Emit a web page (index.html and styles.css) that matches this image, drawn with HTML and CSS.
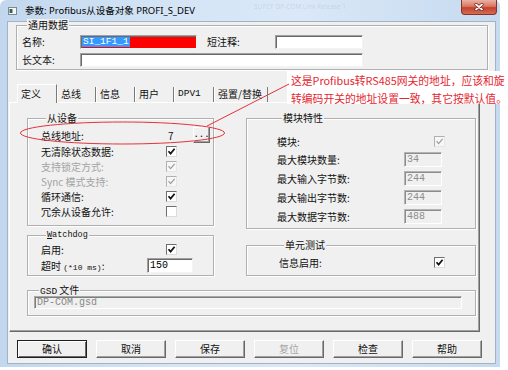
FILE: index.html
```html
<!DOCTYPE html>
<html lang="zh-CN">
<head>
<meta charset="utf-8">
<title>参数: Profibus从设备对象 PROFI_S_DEV</title>
<link rel="stylesheet" href="styles.css">
</head>
<body>
<div class="window">
  <div class="titlebar">
    <svg class="app-icon" width="9" height="8" viewBox="0 0 9 8">
      <rect x="0.5" y="0.5" width="8" height="7" fill="#f6f6f6" stroke="#7d8a94"/>
      <rect x="1.5" y="2" width="3" height="4" fill="#2e6a50"/>
    </svg>
    <span class="title">参数: Profibus从设备对象 PROFI_S_DEV</span>
    <span class="ghost">SUPCF DP-COM Link Release 1</span>
    <div class="close">
      <svg width="10" height="8" viewBox="0 0 10 8">
        <path d="M2 1.5 L8 6.5 M8 1.5 L2 6.5" stroke="#6b1d14" stroke-width="3.2" stroke-linecap="round"/>
        <path d="M2 1.5 L8 6.5 M8 1.5 L2 6.5" stroke="#ffffff" stroke-width="1.8" stroke-linecap="round"/>
      </svg>
    </div>
  </div>

  <div class="client">
    <div class="group general">
      <div class="legend">通用数据</div>
      <div class="general-grid">
        <span class="glabel">名称:</span>
        <div class="field name-field"><span class="sel mono">SI_1F1_1</span></div>
        <span class="glabel short-label">短注释:</span>
        <div class="field"></div>
        <span class="glabel">长文本:</span>
        <div class="field long"></div>
      </div>
    </div>

    <div class="tabs">
      <div class="tab active w40">定义</div>
      <div class="tab w39">总线</div>
      <div class="tab w39">信息</div>
      <div class="tab w39">用户</div>
      <div class="tab w40 mono tab-dpv">DPV1</div>
      <div class="tab w54">强置/替换</div>
    </div>

    <div class="pane">
      <div class="cols">
        <div class="col col-left">
          <div class="group slave">
            <div class="legend">从设备</div>
            <div class="rows">
              <div class="row row-addr">
                <span class="lbl">总线地址:</span>
                <span class="val">7</span>
                <span class="dots">...</span>
              </div>
              <div class="row">
                <span class="lbl">无清除状态数据:</span>
                <span class="cb"><svg viewBox="0 0 9 9"><path d="M1.5 4.2 L3.6 6.6 L7.6 1.8"/></svg></span>
              </div>
              <div class="row dis">
                <span class="lbl">支持锁定方式:</span>
                <span class="cb dis"><svg viewBox="0 0 9 9"><path d="M1.5 4.2 L3.6 6.6 L7.6 1.8"/></svg></span>
              </div>
              <div class="row dis">
                <span class="lbl">Sync 模式支持:</span>
                <span class="cb dis"><svg viewBox="0 0 9 9"><path d="M1.5 4.2 L3.6 6.6 L7.6 1.8"/></svg></span>
              </div>
              <div class="row">
                <span class="lbl">循环通信:</span>
                <span class="cb"><svg viewBox="0 0 9 9"><path d="M1.5 4.2 L3.6 6.6 L7.6 1.8"/></svg></span>
              </div>
              <div class="row">
                <span class="lbl">冗余从设备允许:</span>
                <span class="cb"></span>
              </div>
            </div>
          </div>

          <div class="group watchdog">
            <div class="legend mono wd-legend"><u>W</u>atchdog</div>
            <div class="rows wd-rows">
              <div class="row">
                <span class="lbl">启用:</span>
                <span class="cb"><svg viewBox="0 0 9 9"><path d="M1.5 4.2 L3.6 6.6 L7.6 1.8"/></svg></span>
              </div>
              <div class="row row-timeout">
                <span class="lbl lbl-timeout">超时 <span class="mono small-mono">(*10 ms)</span>:</span>
                <div class="field num"><span class="mono">150</span></div>
              </div>
            </div>
          </div>
        </div>

        <div class="col col-right">
          <div class="group module">
            <div class="legend">模块特性</div>
            <div class="rows mod-rows">
              <div class="row row-mod">
                <span class="lbl lbl-mod">模块:</span>
                <span class="cb dis"><svg viewBox="0 0 9 9"><path d="M1.5 4.2 L3.6 6.6 L7.6 1.8"/></svg></span>
              </div>
              <div class="row row-19">
                <span class="lbl lbl-num">最大模块数量:</span>
                <div class="field num-dis"><span class="mono">34</span></div>
              </div>
              <div class="row row-19">
                <span class="lbl lbl-num">最大输入字节数:</span>
                <div class="field num-dis"><span class="mono">244</span></div>
              </div>
              <div class="row row-19">
                <span class="lbl lbl-num">最大输出字节数:</span>
                <div class="field num-dis"><span class="mono">244</span></div>
              </div>
              <div class="row row-19">
                <span class="lbl lbl-num">最大数据字节数:</span>
                <div class="field num-dis"><span class="mono">488</span></div>
              </div>
            </div>
          </div>

          <div class="group unit">
            <div class="legend">单元测试</div>
            <div class="rows unit-rows">
              <div class="row">
                <span class="lbl lbl-unit">信息启用:</span>
                <span class="cb"><svg viewBox="0 0 9 9"><path d="M1.5 4.2 L3.6 6.6 L7.6 1.8"/></svg></span>
              </div>
            </div>
          </div>
        </div>
      </div>

      <div class="group gsd">
        <div class="legend"><span class="mono gsd-mono">GSD</span> 文件</div>
        <div class="field gsd-field"><span class="mono">DP-COM.gsd</span></div>
      </div>
    </div>

    <div class="buttons">
      <div class="btn default">确认</div>
      <div class="btn">取消</div>
      <div class="btn">保存</div>
      <div class="btn disabled">复位</div>
      <div class="btn">检查</div>
      <div class="btn">帮助</div>
    </div>
  </div>
</div>

<div class="note">
  <div>这是Profibus转RS485网关的地址，应该和旋</div>
  <div>转编码开关的地址设置一致，其它按默认值。</div>
</div>

<svg class="marks" width="508" height="370" viewBox="0 0 508 370">
  <ellipse cx="122.5" cy="133" rx="102" ry="11" fill="none" stroke="#e5323a" stroke-width="1"/>
  <line x1="207" y1="126" x2="289" y2="84" stroke="#e5323a" stroke-width="1"/>
</svg>
</body>
</html>
```

FILE: styles.css
```css
* { box-sizing: border-box; }
html, body { margin: 0; padding: 0; }
body {
  width: 508px;
  height: 370px;
  background: #ffffff;
  font-family: "Noto Sans CJK SC", "Noto Sans", sans-serif;
  font-size: 10px;
  color: #111;
  overflow: hidden;
  position: relative;
}
.mono { font-family: "Liberation Mono", "DejaVu Sans Mono", monospace; }

.window {
  position: relative;
  width: 500px;
  height: 367px;
  background: linear-gradient(to right, #c2d7ee 0%, #d5e5f6 35%, #dae8f7 60%, #c6daef 100%);
  border-radius: 6px 6px 0 0;
  display: flex;
  flex-direction: column;
}

.titlebar {
  height: 22px;
  display: flex;
  align-items: center;
  padding-left: 8px;
}
.app-icon { flex: none; margin-right: 8px; }
.title {
  width: 229px;
  flex: none;
  font-family: "Noto Sans", "Noto Sans CJK SC", sans-serif;
  font-size: 9.5px;
  line-height: 12px;
  color: #000;
  white-space: nowrap;
}
.ghost {
  align-self: flex-start;
  margin-top: 2px;
  font-family: "Noto Sans", sans-serif;
  font-size: 6.5px;
  color: rgba(70, 95, 130, 0.16);
  white-space: nowrap;
}
.close {
  margin-left: auto;
  margin-right: 3px;
  align-self: flex-start;
  width: 36px;
  height: 15px;
  border: 1px solid #83352c;
  border-top: none;
  border-radius: 0 0 4px 4px;
  background: linear-gradient(#eab2a4 0%, #d97863 45%, #c4412e 55%, #d46c52 100%);
  display: flex;
  align-items: center;
  justify-content: center;
}

.client {
  flex: 1;
  margin: 0 5px 4px 8px;
  background: #f0f0f0;
  display: flex;
  flex-direction: column;
  box-shadow: 0 0 0 1px #9fb4c9;
}

.group {
  border: 1px solid #b0b0b0;
  box-shadow: inset 1px 1px 0 #ffffff, 1px 1px 0 #ffffff;
}
.legend {
  width: max-content;
  height: 12px;
  line-height: 12px;
  margin: -7px 0 0 5px;
  padding: 0 1px;
  background: #f0f0f0;
  color: #111;
  white-space: nowrap;
}

.field {
  height: 14px;
  background: #ffffff;
  border: 1px solid;
  border-color: #a0a0a0 #f4f4f4 #f4f4f4 #a0a0a0;
  box-shadow: inset 1px 1px 0 #6a6a6a;
  display: flex;
  align-items: center;
}

/* general data */
.general {
  margin: 3px 0 0 8px;
  width: 472px;
  padding: 0 0 2px 5px;
}
.general-grid {
  margin-top: 4px;
  display: grid;
  grid-template-columns: 58px 117px 78px 88px;
  grid-auto-rows: 14px;
  row-gap: 4px;
}
.glabel { line-height: 14px; white-space: nowrap; }
.short-label { padding-left: 10px; }
.long { grid-column: 2 / 5; }
.name-field { background: #ff0000; }
.sel {
  margin-left: 1px;
  height: 10px;
  line-height: 10px;
  padding: 0 1px;
  background: #3399ff;
  color: #ffffff;
  font-size: 9.5px;
}

/* tabs */
.tabs {
  position: relative;
  z-index: 1;
  display: flex;
  align-items: flex-end;
  height: 18px;
  margin: 14px 0 0 9px;
}
.tab {
  height: 15px;
  line-height: 14px;
  padding-left: 3px;
  border-left: 1px solid #ffffff;
  border-right: 1px solid #7a7a7a;
  white-space: nowrap;
}
.tab.active {
  height: 19px;
  line-height: 17px;
  margin-bottom: -1px;
  border-top: 1px solid #ffffff;
  background: #f0f0f0;
}
.tab-dpv { font-size: 9.5px; }
.w39 { width: 39px; }
.w40 { width: 40px; }
.w54 { width: 54px; }

/* tab pane */
.pane {
  margin-left: 1px;
  width: 471px;
  height: 230px;
  border: 1px solid;
  border-color: #ffffff #696969 #696969 #ffffff;
  box-shadow: inset -1px -1px 0 #a0a0a0;
  padding: 15px 0 0 17px;
}
.cols { display: flex; gap: 32px; }
.col { display: flex; flex-direction: column; }
.col-left { width: 187px; }
.col-right { width: 230px; }

.row {
  display: flex;
  align-items: center;
  height: 15px;
  white-space: nowrap;
}
.row.dis .lbl { color: #a3a3a3; }
.lbl { width: 125px; flex: none; }

.cb {
  width: 11px;
  height: 11px;
  flex: none;
  background: #ffffff;
  border: 1px solid;
  border-color: #6e6e6e #dcdcdc #dcdcdc #6e6e6e;
  display: flex;
  align-items: center;
  justify-content: center;
}
.cb svg { width: 9px; height: 9px; }
.cb path { fill: none; stroke: #111; stroke-width: 1.7; }
.cb.dis { background: #f7f7f7; border-color: #b0b0b0 #e6e6e6 #e6e6e6 #b0b0b0; }
.cb.dis path { stroke: #9c9c9c; stroke-width: 1.2; }

/* slave group */
.slave { height: 108px; padding-left: 13px; }
.slave .rows { margin-top: 2px; }
.row-addr { height: 18px; }
.val { width: 27px; padding-left: 2px; }
.dots {
  width: 17px;
  height: 16px;
  flex: none;
  border: 1px solid;
  border-color: #ffffff #696969 #696969 #ffffff;
  box-shadow: inset -1px -1px 0 #a0a0a0;
  display: flex;
  align-items: flex-end;
  justify-content: center;
  font-family: "Liberation Mono", monospace;
  font-size: 9px;
  line-height: 11px;
  padding-bottom: 1px;
  color: #000;
}

/* watchdog */
.watchdog { margin-top: 9px; height: 41px; padding-left: 13px; }
.wd-legend { font-size: 8.5px; }
.wd-rows { margin-top: 1px; }
.row-timeout { height: 16px; align-items: flex-end; }
.lbl-timeout { width: 106px; align-self: center; }
.small-mono { font-size: 8px; }
.num { width: 46px; height: 15px; padding-left: 2px; }
.num .mono { font-size: 10px; color: #000; }

/* module group */
.module { height: 111px; padding-left: 30px; }
.mod-rows { margin-top: 9px; }
.row-mod { height: 17px; }
.lbl-mod { width: 157px; }
.row-19 { height: 19px; }
.lbl-num { width: 127px; }
.num-dis {
  width: 38px;
  height: 15px;
  padding-left: 2px;
  background: #f0f0f0;
  border-color: #b4b4b4 #ffffff #ffffff #b4b4b4;
  box-shadow: inset 1px 1px 0 #8c8c8c;
}
.num-dis .mono { font-size: 10px; color: #8d8d8d; }

/* unit test */
.unit { margin-top: 16px; height: 31px; padding-left: 32px; }
.unit-rows { margin-top: 4px; }
.lbl-unit { width: 155px; }

/* gsd */
.gsd { margin-top: 14px; width: 449px; height: 26px; padding-left: 6px; }
.gsd-mono { font-size: 9.5px; }
.gsd-field {
  width: 428px;
  height: 13px;
  padding-left: 2px;
  background: #f0f0f0;
  border-color: #a8a8a8 #ffffff #ffffff #a8a8a8;
  box-shadow: inset 1px 1px 0 #7c7c7c;
}
.gsd-field .mono { font-size: 10px; color: #8a8a8a; }

/* buttons */
.buttons {
  margin: 8px 0 0 9px;
  width: 465px;
  display: flex;
  justify-content: space-between;
}
.btn {
  width: 70px;
  height: 18px;
  border: 1px solid;
  border-color: #ffffff #696969 #696969 #ffffff;
  box-shadow: inset -1px -1px 0 #a0a0a0;
  text-align: center;
  line-height: 16px;
  color: #111;
}
.btn.default {
  border-color: #1e1e1e;
  box-shadow: inset 1px 1px 0 #ffffff, inset -1px -1px 0 #696969;
}
.btn.disabled { color: #a6a6a6; }

/* annotation overlay */
.note {
  position: absolute;
  left: 287px;
  top: 71px;
  width: 221px;
  height: 33px;
  padding-left: 4px;
  background: #ffffff;
  color: #e5262f;
  font-size: 10.8px;
  line-height: 18px;
  white-space: nowrap;
}
.marks {
  position: absolute;
  left: 0;
  top: 0;
  pointer-events: none;
}
```
